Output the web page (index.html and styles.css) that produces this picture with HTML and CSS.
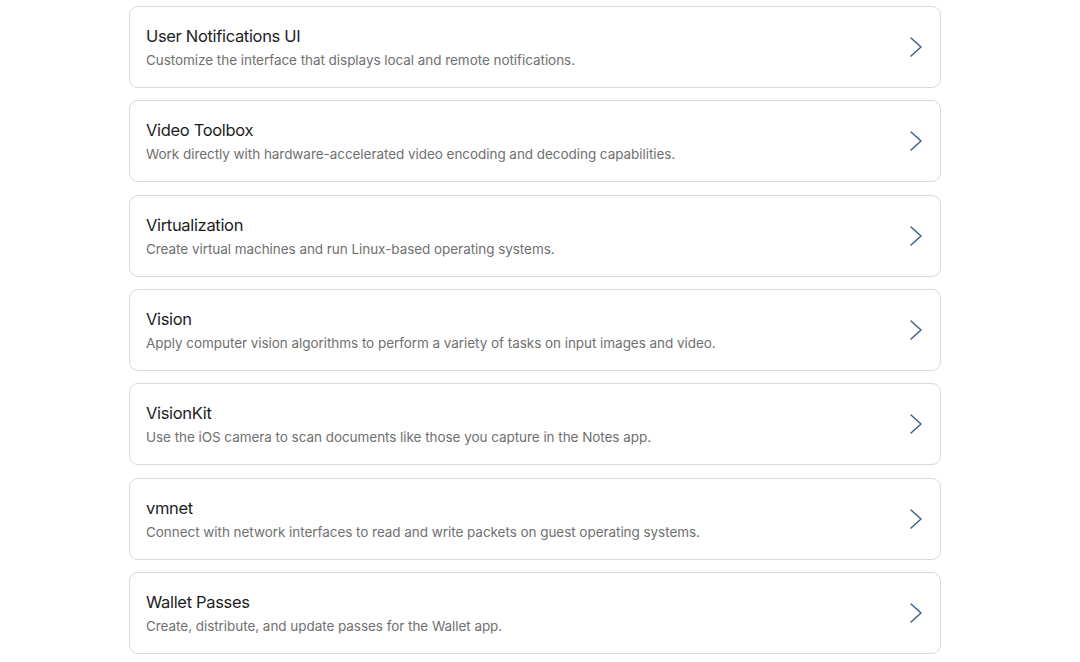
FILE: index.html
```html
<!DOCTYPE html>
<html lang="en">
<head>
  <meta charset="UTF-8" />
  <title>Frameworks</title>
  <meta name="viewport" content="width=device-width, initial-scale=1.0" />
  <link rel="stylesheet" href="styles.css">
</head>
<body>
  <ul class="topic-list">
    <li class="topic-card">
      <div class="topic-text">
        <h3>User Notifications UI</h3>
        <p>Customize the interface that displays local and remote notifications.</p>
      </div>
      <svg class="chevron" viewBox="0 0 14 22"><path d="M2 2 L12 11 L2 20" /></svg>
    </li>
    <li class="topic-card">
      <div class="topic-text">
        <h3>Video Toolbox</h3>
        <p>Work directly with hardware-accelerated video encoding and decoding capabilities.</p>
      </div>
      <svg class="chevron" viewBox="0 0 14 22"><path d="M2 2 L12 11 L2 20" /></svg>
    </li>
    <li class="topic-card">
      <div class="topic-text">
        <h3>Virtualization</h3>
        <p>Create virtual machines and run Linux-based operating systems.</p>
      </div>
      <svg class="chevron" viewBox="0 0 14 22"><path d="M2 2 L12 11 L2 20" /></svg>
    </li>
    <li class="topic-card">
      <div class="topic-text">
        <h3>Vision</h3>
        <p>Apply computer vision algorithms to perform a variety of tasks on input images and video.</p>
      </div>
      <svg class="chevron" viewBox="0 0 14 22"><path d="M2 2 L12 11 L2 20" /></svg>
    </li>
    <li class="topic-card">
      <div class="topic-text">
        <h3>VisionKit</h3>
        <p>Use the iOS camera to scan documents like those you capture in the Notes app.</p>
      </div>
      <svg class="chevron" viewBox="0 0 14 22"><path d="M2 2 L12 11 L2 20" /></svg>
    </li>
    <li class="topic-card">
      <div class="topic-text">
        <h3>vmnet</h3>
        <p>Connect with network interfaces to read and write packets on guest operating systems.</p>
      </div>
      <svg class="chevron" viewBox="0 0 14 22"><path d="M2 2 L12 11 L2 20" /></svg>
    </li>
    <li class="topic-card">
      <div class="topic-text">
        <h3>Wallet Passes</h3>
        <p>Create, distribute, and update passes for the Wallet app.</p>
      </div>
      <svg class="chevron" viewBox="0 0 14 22"><path d="M2 2 L12 11 L2 20" /></svg>
    </li>
  </ul>
</body>
</html>
```

FILE: styles.css
```css
html, body {
  margin: 0;
  padding: 0;
  background: #fff;
  font-family: 'Inter', 'Noto Sans', sans-serif;
  overflow: hidden;
}

.topic-list {
  list-style: none;
  margin: 0;
  padding: 6px 0 0 129px;
  width: 812px;
  display: flex;
  flex-direction: column;
  gap: 12.33px;
}

.topic-card {
  box-sizing: border-box;
  height: 82px;
  border: 1px solid #d9d9d9;
  border-radius: 9px;
  padding: 0 16px 0 16px;
  display: flex;
  align-items: center;
  justify-content: space-between;
}

.topic-text h3 {
  margin: 0 0 6px 0;
  font-size: 16.5px;
  font-weight: 400;
  color: #1d1d1f;
  letter-spacing: -0.33px;
}

.topic-text p {
  margin: 0;
  font-size: 13.5px;
  color: #707070;
  letter-spacing: -0.05px;
}

.chevron {
  width: 14px;
  height: 22px;
  margin-right: 1px;
}

.chevron path {
  fill: none;
  stroke: #3e5f8c;
  stroke-width: 1.5;
  stroke-linecap: round;
  stroke-linejoin: round;
}
```
